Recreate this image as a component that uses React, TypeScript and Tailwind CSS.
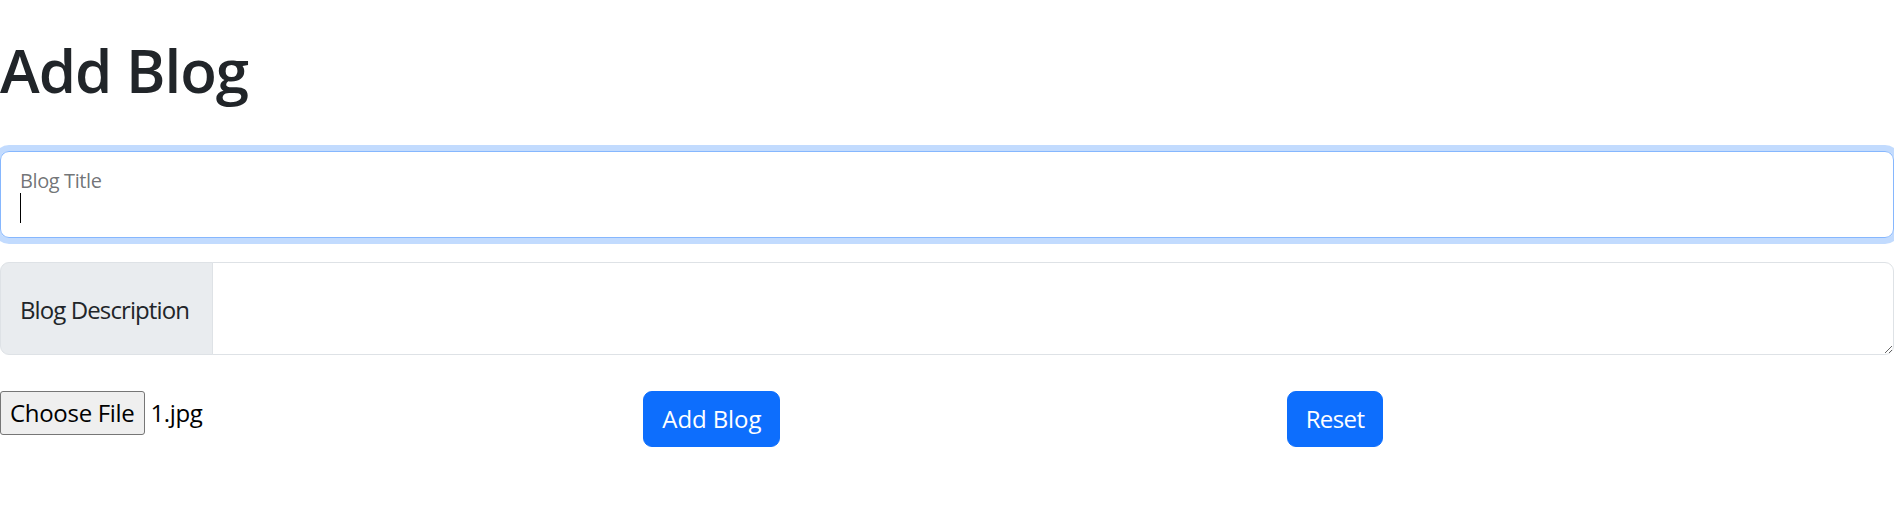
export default function App() {
  return (
    <div className="w-[1894px] min-h-[529px] bg-white text-[#212529] font-['Segoe_UI','Open_Sans',sans-serif]">
      <h1 className="pt-[34px] mb-[45px] text-[60px] leading-[72px] font-semibold tracking-[-1px]">Add Blog</h1>

      <form>
        {/* floating title input, shown focused */}
        <div className="relative mb-6">
          <input
            type="text"
            className="block w-full h-[87px] rounded-[9px] border-[1.5px] border-[#86b7fe] shadow-[0_0_0_6px_rgba(13,110,253,0.25)] px-[18px] pt-[39px] pb-[9px] text-[24px] outline-none"
          />
          <label className="absolute left-[20px] top-[15px] text-[20px] leading-[30px] tracking-[-0.4px] text-[rgba(33,37,41,0.65)]">
            Blog Title
          </label>
          <span className="absolute left-[20px] top-[42px] w-px h-[30px] bg-black" />
        </div>

        <div className="flex h-[93px] mb-[36px]">
          <span className="flex items-center w-[213px] shrink-0 pl-[19px] pt-[3px] whitespace-nowrap text-[24px] tracking-[-0.9px] bg-[#e9ecef] border-[1.5px] border-[#dee2e6] rounded-l-[9px]">
            Blog Description
          </span>
          <textarea className="flex-1 -ml-px px-[18px] py-[9px] text-[24px] border-[1.5px] border-[#dee2e6] rounded-r-[9px] outline-none resize-y" />
        </div>

        <div className="grid grid-cols-3 gap-x-[36px]">
          <div className="flex items-start">
            <span className="flex items-center h-[44px] px-[9px] text-[24px] tracking-[-0.3px] text-black bg-[#efefef] border-[1.5px] border-[#767676] rounded-[3px]">
              Choose File
            </span>
            <span className="ml-[6px] mt-[4px] text-[24px] leading-[36px] tracking-[-0.4px] text-black">1.jpg</span>
          </div>
          <div>
            <button type="submit" className="px-[18px] py-[9px] text-[24px] leading-[36px] tracking-[-0.1px] text-white bg-[#0d6efd] border-[1.5px] border-[#0d6efd] rounded-[9px]">
              Add Blog
            </button>
          </div>
          <div>
            <button type="reset" className="px-[18px] py-[9px] text-[24px] leading-[36px] tracking-[-0.6px] text-white bg-[#0d6efd] border-[1.5px] border-[#0d6efd] rounded-[9px]">
              Reset
            </button>
          </div>
        </div>
      </form>
    </div>
  );
}
